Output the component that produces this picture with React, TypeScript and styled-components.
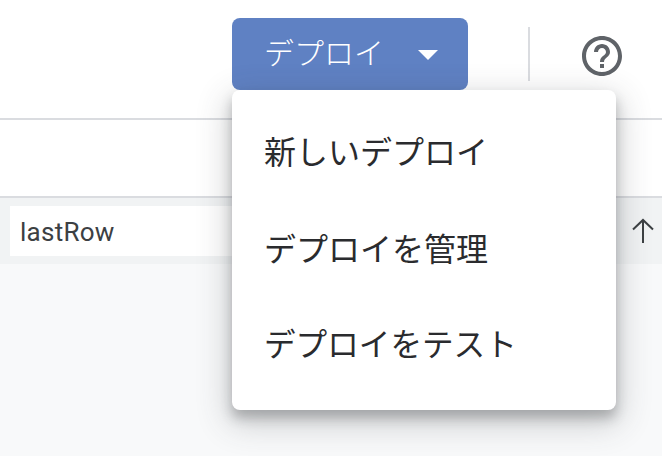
import React from "react";
import styled, { createGlobalStyle } from "styled-components";

const Global = createGlobalStyle`
  html, body { margin: 0; padding: 0; background: #fff; }
  body { font-family: "Noto Sans CJK JP", "Noto Sans", sans-serif; overflow: hidden; }
`;

const Page = styled.div`
  position: relative;
  width: 662px;
  height: 456px;
  overflow: hidden;
  background: #f8f9fa;
  display: flex;
  flex-direction: column;
`;

const Header = styled.header`
  height: 120px;
  box-sizing: border-box;
  flex: none;
  background: #fff;
  border-bottom: 2px solid #dadce0;
  display: flex;
  align-items: flex-start;
  padding: 18px 0 0 232px;
`;

const DeployButton = styled.button`
  width: 236px;
  height: 72px;
  flex: none;
  border: 0;
  border-radius: 8px;
  background: #5f81c3;
  color: #fff;
  font: 300 30px/1 "Noto Sans CJK JP", sans-serif;
  display: flex;
  align-items: center;
  padding: 0 30px 0 32px;
  justify-content: space-between;
`;

const ButtonLabel = styled.span`
  margin-top: -6px;
`;

const Caret = styled.svg`
  width: 20px;
  height: 10px;
  margin-top: 2px;
  flex: none;
`;

const Divider = styled.div`
  width: 2px;
  height: 54px;
  margin: 9px 0 0 60px;
  background: #dadce0;
  flex: none;
`;

const Help = styled.svg`
  width: 48px;
  height: 48px;
  margin: 14px 0 0 48px;
  flex: none;
  color: #5f6368;
`;

const BlankRow = styled.div`
  height: 78px;
  box-sizing: border-box;
  flex: none;
  background: #fff;
  border-bottom: 2px solid #dadce0;
`;

const FindBar = styled.div`
  height: 66px;
  flex: none;
  background: #f1f3f4;
  display: flex;
  align-items: flex-start;
  padding: 8px 0 0 10px;
  box-sizing: border-box;
`;

const FindInput = styled.div`
  width: 400px;
  height: 50px;
  background: #fff;
  color: #3c4043;
  font: 400 26px/52px Roboto, sans-serif;
  letter-spacing: 0.25px;
  padding-left: 10px;
  flex: none;
`;

const UpIcon = styled.svg`
  width: 22px;
  height: 26px;
  margin: 12px 0 0 212px;
  flex: none;
  color: #3c4043;
`;

const Menu = styled.ul`
  position: absolute;
  left: 232px;
  top: 90px;
  width: 384px;
  height: 320px;
  margin: 0;
  padding: 11px 0 0;
  box-sizing: border-box;
  list-style: none;
  background: #fff;
  border-radius: 8px;
  box-shadow: 0 8px 12px 0 rgba(60, 64, 67, 0.3), 0 10px 32px 4px rgba(60, 64, 67, 0.24);
`;

const MenuItem = styled.li`
  height: 97px;
  display: flex;
  align-items: center;
  padding-left: 32px;
  color: #2a2b2e;
  font: 400 32px/1 "Noto Sans CJK JP", sans-serif;

  &:last-child {
    height: 96px;
    font-size: 31.6px;
  }
`;

export default function App() {
  return (
    <Page>
      <Global />
      <Header>
        <DeployButton>
          <ButtonLabel>デプロイ</ButtonLabel>
          <Caret viewBox="0 0 20 10" aria-hidden="true">
            <path d="M0 0h20L10 10z" fill="#fff" />
          </Caret>
        </DeployButton>
        <Divider />
        <Help viewBox="0 0 24 24" aria-hidden="true">
          <path
            fill="currentColor"
            d="M11 18h2v-2h-2v2zm1-16C6.48 2 2 6.48 2 12s4.48 10 10 10 10-4.48 10-10S17.52 2 12 2zm0 18c-4.41 0-8-3.59-8-8s3.59-8 8-8 8 3.59 8 8-3.59 8-8 8zm0-14c-2.21 0-4 1.79-4 4h2c0-1.1.9-2 2-2s2 .9 2 2c0 2-3 1.75-3 5h2c0-2.25 3-2.5 3-5 0-2.21-1.79-4-4-4z"
          />
        </Help>
      </Header>
      <BlankRow />
      <FindBar>
        <FindInput>lastRow</FindInput>
        <UpIcon viewBox="0 0 22 26" aria-hidden="true">
          <path d="M11 25V2M1 11.5L11 2l10 9.5" fill="none" stroke="currentColor" strokeWidth="2" />
        </UpIcon>
      </FindBar>
      <Menu>
        <MenuItem>新しいデプロイ</MenuItem>
        <MenuItem>デプロイを管理</MenuItem>
        <MenuItem>デプロイをテスト</MenuItem>
      </Menu>
    </Page>
  );
}
